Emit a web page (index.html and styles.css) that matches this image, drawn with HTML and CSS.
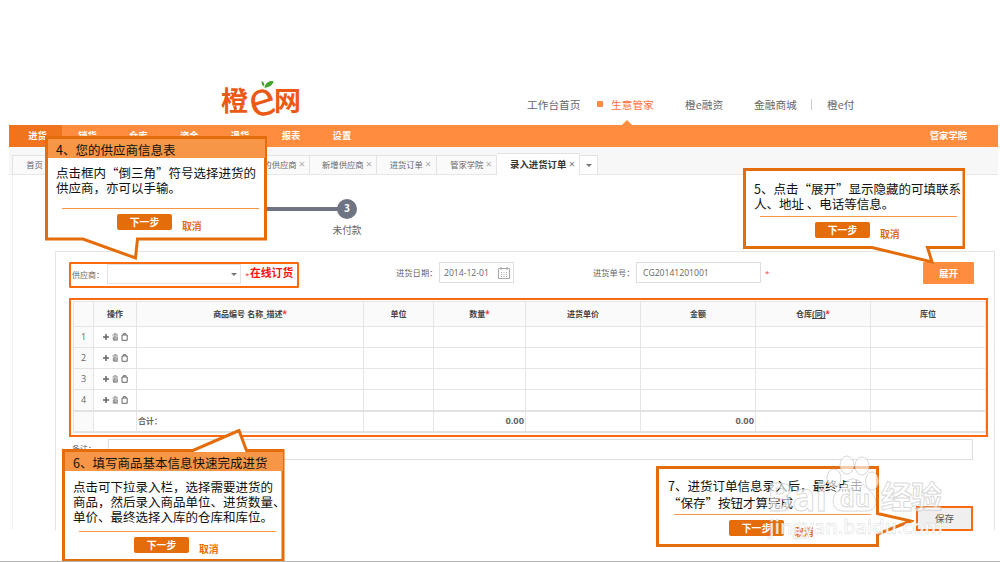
FILE: index.html
```html
<!DOCTYPE html>
<html lang="zh-CN">
<head>
    <meta charset="UTF-8">
    <meta name="viewport" content="width=device-width, initial-scale=1.0">
    <title>橙e网 - 录入进货订单</title>
    <link rel="stylesheet" href="styles.css">
</head>
<body>
    <svg class="defs" width="0" height="0">
        <symbol id="ops" viewBox="0 0 26 8">
            <path d="M1 4h6M4 1v6" stroke="#666" stroke-width="1.5"/>
            <path d="M10.500 2h5.500M12 .8h2.500M11.300 3.500v3.700h4V3.500M12.700 3v4M14 3v4" fill="none" stroke="#777" stroke-width=".9"/>
            <path d="M20 2h5.200v5.300H20zM21.300 1.800V.7h2.600v1.100" fill="none" stroke="#666"/>
        </symbol>
    </svg>
    <div class="page">
        <header class="header">
            <div class="logo">
                <span>橙</span><span class="logo-e">e</span><span>网</span>
                <svg class="leaf" width="14" height="9" viewBox="0 0 14 9">
                    <path d="M3.500 8C4 3 8 .5 12.500 1 12 5 8.500 7 3.500 8zM3 6.500C.8 5.200.3 3 .8.700 3 2 3.800 4.200 3 6.500z" fill="#41a62a"/>
                </svg>
            </div>
            <nav class="top-nav">
                <a class="t1">工作台首页</a>
                <a class="t2 current"><i class="dot"></i>生意管家</a>
                <a class="t3">橙e融资</a>
                <a class="t4">金融商城</a>
                <i class="sep"></i>
                <a>橙e付</a>
            </nav>
        </header>
        <nav class="main-nav">
            <a class="active">进货</a><a>销货</a><a>仓库</a><a>资金</a><a>退货</a><a>报表</a><a>设置</a>
            <a class="college">管家学院</a>
        </nav>
        <div class="tabs">
            <div class="tab home">首页</div>
            <div class="tab supplier">我的供应商 <i>×</i></div>
            <div class="tab new-supplier">新增供应商 <i>×</i></div>
            <div class="tab order">进货订单 <i>×</i></div>
            <div class="tab school">管家学院 <i>×</i></div>
            <div class="tab open">录入进货订单 <i>×</i></div>
            <div class="tab more"><b class="caret"></b></div>
        </div>
        <main class="content">
            <div class="steps">
                <div class="step-line"></div>
                <div class="step"><b>3</b><span>未付款</span></div>
            </div>
            <section class="panel">
                <div class="form-row">
                    <div class="supplier-box">
                        <label>供应商：</label>
                        <div class="select"><b class="caret"></b></div>
                        <em>*</em><strong>在线订货</strong>
                    </div>
                    <label class="date-label">进货日期：</label>
                    <div class="input date">2014-12-01
                        <svg width="12" height="12" viewBox="0 0 12 12" fill="none" stroke="#aaa">
                            <path d="M.5 1.500h11v10H.5zM3 0v3M9 0v3"/>
                            <path d="M3 5.500h7M3 7.500h7M3 9.500h7" stroke-dasharray="1 1.500"/>
                        </svg>
                    </div>
                    <label class="no-label">进货单号：</label>
                    <div class="input number">CG20141201001</div>
                    <em>*</em>
                    <button class="expand">展开</button>
                </div>
                <div class="table-box">
                    <table>
                        <colgroup><col class="c1"><col class="c2"><col class="c3"><col class="c4"><col class="c5"><col class="c6"><col class="c6"><col class="c6"><col class="c6"></colgroup>
                        <thead>
                            <tr><th></th><th>操作</th><th>商品编号 名称_描述<em>*</em></th><th>单位</th><th>数量<em>*</em></th><th>进货单价</th><th>金额</th><th>仓库<u>(同)</u><em>*</em></th><th>库位</th></tr>
                        </thead>
                        <tbody>
                            <tr><td>1</td><td><svg class="ops"><use href="#ops"/></svg></td><td></td><td></td><td></td><td></td><td></td><td></td><td></td></tr>
                            <tr><td>2</td><td><svg class="ops"><use href="#ops"/></svg></td><td></td><td></td><td></td><td></td><td></td><td></td><td></td></tr>
                            <tr><td>3</td><td><svg class="ops"><use href="#ops"/></svg></td><td></td><td></td><td></td><td></td><td></td><td></td><td></td></tr>
                            <tr><td>4</td><td><svg class="ops"><use href="#ops"/></svg></td><td></td><td></td><td></td><td></td><td></td><td></td><td></td></tr>
                            <tr class="total"><td></td><td></td><td><label>合计：</label></td><td></td><td class="sum">0.00</td><td></td><td class="sum">0.00</td><td></td><td></td></tr>
                        </tbody>
                    </table>
                </div>
                <div class="remark">
                    <label>备注：</label>
                    <div class="input"></div>
                </div>
                <div class="actions"><button class="save">保存</button></div>
            </section>
        </main>

        <div class="callout callout-4">
            <svg class="bubble" width="222" height="125"><path d="M1.500 1.500H220.500V103H92.500L90.500 122 38 103H1.500z"/></svg>
            <h3>4、您的供应商信息表</h3>
            <p>点击框内“倒三角”符号选择进货的<br>供应商，亦可以手输。</p>
            <div class="buttons"><button>下一步</button><a>取消</a></div>
        </div>
        <div class="callout callout-5">
            <svg class="bubble" width="222" height="97"><path d="M1.500 1.500H221V79.500H184.500L189 94 129 79.500H1.500z"/></svg>
            <p>5、点击“展开”显示隐藏的可填联系<br>人、地址 、电话等信息。</p>
            <div class="buttons"><button>下一步</button><a>取消</a></div>
        </div>
        <div class="callout callout-6">
            <svg class="bubble" width="223" height="133"><path d="M1.500 21.500H131L177 1.500 184.500 21.500H221V131.500H1.500z"/></svg>
            <h3>6、填写商品基本信息快速完成进货</h3>
            <p>点击可下拉录入栏，选择需要进货的<br>商品，然后录入商品单位、进货数量、<br>单价、最终选择入库的仓库和库位。</p>
            <div class="buttons"><button>下一步</button><a>取消</a></div>
        </div>
        <div class="callout callout-7">
            <svg class="bubble" width="258" height="82"><path d="M1.500 1.500H221.500V47.500L255 55 221.500 68V79.500H1.500z"/></svg>
            <p>7、进货订单信息录入后，最终点击<br>“保存”按钮才算完成</p>
            <div class="buttons"><button>下一步</button><a>取消</a></div>
        </div>

        <svg class="watermark" width="190" height="95" viewBox="0 0 190 95">
            <g class="paw">
                <ellipse cx="86" cy="12" rx="7" ry="9"/>
                <ellipse cx="101" cy="13" rx="7" ry="9"/>
                <ellipse cx="73" cy="25" rx="7" ry="9"/>
                <ellipse cx="111" cy="28" rx="6.500" ry="9"/>
                <path d="M92 26c-7 0-9 7-15 12-7 6-7 19 4 20h25c11-1 11-13 4-19-7-5-10-13-18-13z"/>
            </g>
            <text class="brand" x="6" y="58" textLength="60" lengthAdjust="spacingAndGlyphs">Bai</text>
            <text class="du" x="79" y="54" textLength="30" lengthAdjust="spacingAndGlyphs">du</text>
            <text class="cjk" x="120" y="55" textLength="61">经验</text>
            <text class="url" x="8" y="81" textLength="174" lengthAdjust="spacingAndGlyphs">jingyan.baidu.com</text>
        </svg>
    </div>
</body>
</html>
```
FILE: styles.css
```css
* {
    box-sizing: border-box;
}
body {
    margin: 0;
    font-family: "Open Sans", "Noto Sans CJK SC", sans-serif;
    font-size: 8px;
    color: #666;
    background: #fff;
}
.defs {
    display: block;
}
.page {
    position: relative;
    width: 1000px;
    height: 562px;
    padding: 0 2px 0 9px;
    border-bottom: 1px solid #b5b5b5;
    overflow: hidden;
    white-space: nowrap;
}
i, em {
    font-style: normal;
}
em {
    color: #f33;
}
label {
    font-family: "Open Sans", "Noto Sans CJK TC", sans-serif;
}
button {
    border: 0;
    padding: 0;
    font: inherit;
}

/* header */
.header {
    display: flex;
    height: 125px;
    padding: 80px 0 0 212px;
}
.logo {
    position: relative;
    display: flex;
    width: 306px;
    height: 40px;
    color: #eb5a14;
    font: bold 27px/40px "Noto Sans CJK SC", sans-serif;
}
.logo-e {
    width: 26px;
    padding-top: 6px;
    font: 48px/24px "Open Sans", sans-serif;
    transform: rotate(-17deg);
    text-align: center;
}
.leaf {
    position: absolute;
    left: 40px;
    top: 0;
}
.top-nav {
    display: flex;
    align-items: center;
    height: 48px;
    font-size: 10.7px;
}
.t1 {
    width: 70px;
}
.t2 {
    position: relative;
    display: flex;
    align-items: center;
    width: 88px;
}
.t3 {
    width: 69px;
}
.t4 {
    width: 57px;
}
.current {
    color: #ff6f3c;
}
.current::after {
    content: "";
    position: absolute;
    left: 24px;
    top: 23px;
    border: 6px solid transparent;
    border-top: 0;
    border-bottom-color: #ff8c3f;
}
.dot {
    width: 6px;
    height: 6px;
    margin-right: 8px;
    border-radius: 1px;
    background: #ff8c3f;
}
.sep {
    width: 16px;
    height: 11px;
    border-left: 1px solid #ccc;
}

/* orange bar */
.main-nav {
    display: flex;
    height: 22px;
    background: #ff8c3f;
    color: #fff;
    font-size: 9.3px;
    font-weight: bold;
    line-height: 21px;
}
.main-nav a {
    width: 50.9px;
    text-align: center;
}
.main-nav .active {
    width: 53px;
    padding-left: 4px;
    background: #f0731e;
}
.main-nav .college {
    width: auto;
    margin-left: auto;
    margin-right: 31px;
}

/* tabs */
.tabs {
    display: flex;
    align-items: flex-end;
    height: 28px;
    padding-left: 3px;
    background: #f7f7f7;
    border-bottom: 1px solid #e7e7e7;
    font-size: 8.3px;
}
.tab {
    height: 19px;
    line-height: 18px;
    border: solid #e3e3e3;
    border-width: 1px 1px 0 0;
    background: #fafafa;
    text-align: center;
}
.tab i {
    color: #aaa;
    font-size: 11px;
    line-height: 10px;
}
.home {
    width: 45px;
    border-left-width: 1px;
}
.supplier {
    width: 253px;
    padding-right: 4px;
    text-align: right;
}
.new-supplier {
    width: 67px;
    padding-left: 8px;
}
.order, .school {
    width: 60px;
}
.order {
    padding-left: 8px;
}
.school {
    padding-left: 9px;
}
.open {
    width: 83px;
    height: 22px;
    margin-bottom: -1px;
    padding-left: 9px;
    line-height: 21px;
    background: #fff;
    color: #333;
    font-size: 9.4px;
    font-weight: bold;
}
.open i {
    color: #777;
    font-weight: normal;
}
.more {
    display: flex;
    align-items: center;
    justify-content: center;
    width: 18px;
    background: #fff;
}
.caret {
    border: 3px solid transparent;
    border-top: 3px solid #777;
    border-bottom: 0;
}

/* content */
.content {
    height: 355px;
    margin-left: 3px;
    padding-left: 42px;
    border-left: 1px solid #f0f0f0;
}
.steps {
    display: flex;
    height: 76px;
    padding-top: 23px;
}
.step-line {
    width: 283px;
    height: 4px;
    margin-top: 9px;
    background: #6f7482;
}
.step {
    display: flex;
    flex-direction: column;
    align-items: center;
    width: 30px;
    margin-left: -6px;
    font-size: 9.7px;
    line-height: 14px;
}
.step b {
    width: 20px;
    height: 20px;
    margin: 1px 0 5px;
    border-radius: 50%;
    background: #6f7482;
    color: #fff;
    text-align: center;
    line-height: 20px;
}
.panel {
    width: 940px;
    height: 279px;
    border: 1px solid #e4e4e4;
    border-bottom: 0;
    padding: 10px 7px 0 13px;
}
.form-row {
    display: flex;
    height: 36px;
}
.form-row label {
    line-height: 21px;
}
.supplier-box {
    display: flex;
    width: 230px;
    height: 26px;
    border: 2px solid #fb6a10;
    border-radius: 1px;
    padding-left: 1px;
}
.supplier-box label {
    width: 35px;
}
.select {
    display: flex;
    align-items: center;
    justify-content: flex-end;
    width: 134px;
    height: 20px;
    padding-right: 3px;
    border: 1px solid #e4e4e4;
}
.supplier-box em {
    width: 9px;
    padding-left: 4px;
    line-height: 22px;
}
.supplier-box strong {
    color: #fb1010;
    font-size: 10.8px;
    line-height: 17px;
}
.form-row .date-label {
    width: 43px;
    margin-left: 97px;
    font-size: 8.3px;
}
.input {
    height: 21px;
    border: 1px solid #dedede;
    padding-left: 4px;
    font-size: 8.6px;
    line-height: 21px;
}
.date {
    display: flex;
    justify-content: space-between;
    width: 75px;
    padding-right: 3px;
}
.date svg {
    margin-top: 4px;
}
.form-row .no-label {
    width: 43px;
    margin-left: 79px;
    font-size: 8.3px;
}
.number {
    width: 125px;
    padding-left: 6px;
}
.form-row > em {
    width: 162px;
    padding-left: 4px;
    line-height: 22px;
}
.expand {
    width: 51px;
    height: 22px;
    border-radius: 1px;
    background: #ff8c3f;
    color: #fff;
    font-size: 9.5px;
    font-weight: bold;
}
.table-box {
    width: 919px;
    height: 139px;
    padding: 1px 1px 0 2px;
    border: 2px solid #fb6a10;
}
table {
    width: 912px;
    table-layout: fixed;
    border-collapse: collapse;
    font-size: 8px;
    color: #666;
}
.c1 { width: 20px; }
.c2 { width: 43px; }
.c3 { width: 227px; }
.c4 { width: 70px; }
.c5 { width: 92px; }
.c6 { width: 115px; }
th, td {
    height: 21px;
    padding: 0;
    border: 1px solid #e5e5e5;
    line-height: 12px;
    text-align: center;
}
th {
    height: 25px;
    background: #fafafa;
    color: #444;
}
td:first-child {
    background: #fafafa;
    font-size: 9px;
}
.ops {
    display: block;
    width: 26px;
    height: 8px;
    margin: 0 auto;
}
.total td {
    border-top: 2px solid #e2e2e2;
    border-bottom: 2px solid #e2e2e2;
    font-weight: bold;
    text-align: left;
    padding: 0 1px;
}
.total .sum {
    text-align: right;
    font-size: 9.3px;
}
.remark {
    display: flex;
    padding: 2px 0 0 3px;
}
.remark label {
    width: 36px;
    line-height: 20px;
}
.remark .input {
    width: 865px;
}
.actions {
    display: flex;
    justify-content: flex-end;
    padding: 46px 14px 0 0;
}
.save {
    width: 57px;
    height: 25px;
    border: 2px solid #fb6a10;
    background: #efefef;
    color: #555;
    font-size: 9.5px;
    line-height: 20px;
}

/* guide bubbles */
.callout {
    position: absolute;
    z-index: 1;
    color: #111;
    font: 12.5px/15px "Noto Sans CJK SC", sans-serif;
}
.bubble {
    position: absolute;
    left: 0;
    top: 0;
    z-index: -1;
    fill: #fff;
    stroke: #e46c0a;
    stroke-width: 3;
}
.callout h3 {
    margin: 3px 2px 0 3px;
    height: 19px;
    padding-left: 8px;
    background: #f79646;
    font: 12.5px/21px "Noto Sans CJK SC", sans-serif;
}
.callout p {
    margin: 0;
    padding-left: 11px;
}
.buttons {
    display: flex;
    width: 197px;
    margin-left: 17px;
    padding: 5px 0 0 55px;
    border-top: 1px solid #f79646;
    color: #e46c0a;
    font-size: 9.8px;
    font-weight: bold;
}
.buttons button {
    width: 55px;
    height: 16px;
    border-radius: 2px;
    background: #e46c0a;
    color: #fff;
    line-height: 15px;
}
.buttons a {
    margin: 5px 0 0 10px;
}
.callout-4 {
    left: 45px;
    top: 136px;
    width: 222px;
}
.callout-4 p {
    padding-top: 7px;
    height: 50px;
}
.callout-5 {
    left: 743px;
    top: 168px;
    width: 222px;
}
.callout-5 p {
    padding-top: 13px;
    height: 48px;
}
.callout-6 {
    left: 62px;
    top: 429px;
    width: 223px;
}
.callout-6 h3 {
    margin-top: 23px;
}
.callout-6 p {
    padding-top: 8px;
    height: 60px;
}
.callout-7 {
    left: 656px;
    top: 466px;
    width: 258px;
}
.callout-7 p {
    height: 48px;
    padding: 12px 0 0 12px;
    line-height: 16.5px;
}
.callout-7 .buttons {
    margin-left: 18px;
}

/* watermark */
.watermark {
    position: absolute;
    left: 761px;
    top: 453px;
    z-index: 2;
    fill: rgba(255, 255, 255, .65);
    stroke: rgba(190, 190, 190, .6);
    stroke-width: 1;
    font-family: "Open Sans", sans-serif;
}
.brand {
    font-size: 40px;
    font-weight: bold;
}
.du {
    font-size: 24px;
    font-weight: bold;
}
.cjk {
    font: bold 31px "Noto Sans CJK SC", sans-serif;
}
.url {
    font-size: 20px;
    font-weight: 600;
    stroke-width: .5;
    fill: rgba(255, 255, 255, .85);
}
```
